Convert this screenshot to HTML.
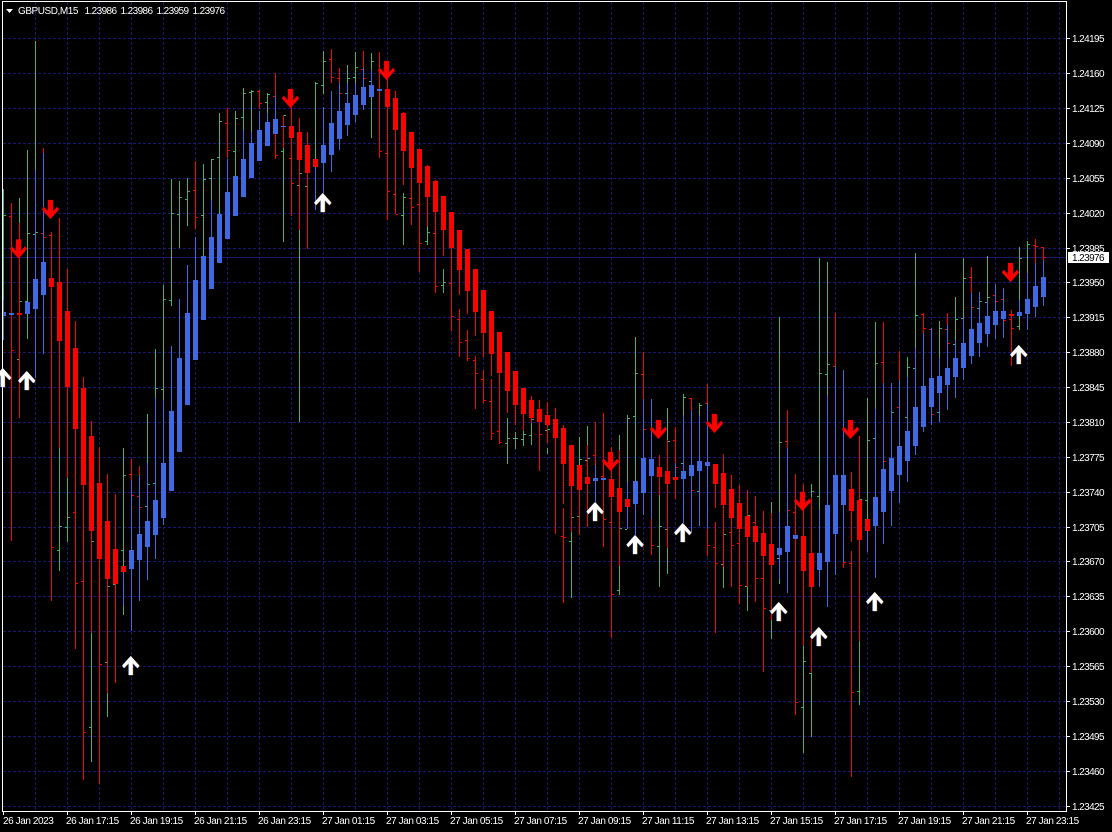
<!DOCTYPE html>
<html><head><meta charset="utf-8"><title>GBPUSD,M15</title>
<style>
html,body{margin:0;padding:0;background:#000;width:1112px;height:832px;overflow:hidden}
svg{display:block}
text{font-family:"Liberation Sans",sans-serif;font-size:10px;fill:#fff}
.p text,text.p{letter-spacing:-.6px}
.d text{letter-spacing:-.42px}
path{fill:none}
</style></head><body>
<svg width="1112" height="832" viewBox="0 0 1112 832" xmlns="http://www.w3.org/2000/svg">
<rect width="1112" height="832" fill="#000"/>
<g shape-rendering="crispEdges">
<path stroke="#191970" stroke-dasharray="3 2" d="M3 38.5H1066M3 73.5H1066M3 108.5H1066M3 143.5H1066M3 178.5H1066M3 213.5H1066M3 248.5H1066M3 282.5H1066M3 317.5H1066M3 352.5H1066M3 387.5H1066M3 422.5H1066M3 457.5H1066M3 492.5H1066M3 527.5H1066M3 561.5H1066M3 596.5H1066M3 631.5H1066M3 666.5H1066M3 701.5H1066M3 736.5H1066M3 771.5H1066M3 806.5H1066"/>
<path stroke="#191970" stroke-dasharray="3 2" d="M35.5 2V811M67.5 2V811M99.5 2V811M131.5 2V811M163.5 2V811M195.5 2V811M227.5 2V811M259.5 2V811M291.5 2V811M323.5 2V811M355.5 2V811M387.5 2V811M419.5 2V811M451.5 2V811M483.5 2V811M515.5 2V811M547.5 2V811M579.5 2V811M611.5 2V811M643.5 2V811M675.5 2V811M707.5 2V811M739.5 2V811M771.5 2V811M803.5 2V811M835.5 2V811M867.5 2V811M899.5 2V811M931.5 2V811M963.5 2V811M995.5 2V811M1027.5 2V811M1059.5 2V811"/>
<path stroke="#191970" d="M3 257.5H1066"/>

<path stroke="#3cb371" d="M3.5 189V300M19.5 198V223M27.5 150V339M35.5 41V170M59.5 448V571M67.5 478V542M91.5 633V762M107.5 693V717M123.5 448V566M123.5 606V615M147.5 414V463M155.5 349V398M163.5 285V400M171.5 179V306M179.5 181V248M187.5 178V226M203.5 164V256M211.5 159V200M219.5 113V214M235.5 111V176M243.5 88V130M251.5 90V132M267.5 93V113M283.5 148V242M299.5 230V422M315.5 82V159M323.5 51V94M347.5 65V83M355.5 52V83M371.5 53V70M371.5 97V138M403.5 193V245M427.5 226V245M443.5 269V293M507.5 418V464M515.5 432V449M523.5 431V446M531.5 423V445M547.5 448V454M571.5 532V598M579.5 437V465M587.5 426V445M619.5 435V450M619.5 566V595M627.5 415V482M635.5 337V481M659.5 495V587M667.5 408V440M667.5 548V574M683.5 394V415M699.5 403V415M723.5 567V588M747.5 587V611M771.5 502V513M771.5 620V639M779.5 317V512M779.5 579V584M803.5 646V753M811.5 484V497M811.5 673V737M819.5 258V510M827.5 262V395M859.5 641V705M867.5 398V519M875.5 322V409M907.5 357V377M915.5 253V348M939.5 321V357M955.5 297V340M963.5 258V318M987.5 256V300M1019.5 247V300M1019.5 316V330M1027.5 241V273
M4 215.5h2M20 301.5h2M17 359.5h2M28 233.5h2M25 301.5h2M33 234.5h2M36 232.5h2M60 526.5h2M57 550.5h2M68 517.5h2M65 527.5h2M92 541.5h2M89 727.5h2M108 586.5h2M105 662.5h2M113 584.5h2M124 475.5h2M121 550.5h2M148 484.5h2M145 506.5h2M156 388.5h2M153 483.5h2M164 299.5h2M161 389.5h2M172 213.5h2M169 300.5h2M180 197.5h2M177 214.5h2M188 191.5h2M185 199.5h2M204 179.5h2M201 215.5h2M212 159.5h2M209 178.5h2M220 121.5h2M217 157.5h2M236 118.5h2M233 151.5h2M244 93.5h2M241 117.5h2M252 91.5h2M249 92.5h2M268 94.5h2M265 102.5h2M284 115.5h2M281 151.5h2M300 173.5h2M297 185.5h2M305 186.5h2M316 83.5h2M324 61.5h2M321 85.5h2M348 78.5h2M345 93.5h2M356 67.5h2M353 77.5h2M372 61.5h2M369 81.5h2M404 197.5h2M401 215.5h2M428 232.5h2M425 241.5h2M444 282.5h2M441 285.5h2M508 438.5h2M505 443.5h2M516 438.5h2M513 438.5h2M524 434.5h2M521 439.5h2M532 419.5h2M529 435.5h2M548 429.5h2M545 430.5h2M572 517.5h2M569 541.5h2M580 459.5h2M577 516.5h2M588 458.5h2M585 460.5h2M620 528.5h2M617 590.5h2M628 418.5h2M625 529.5h2M636 373.5h2M633 416.5h2M660 526.5h2M657 546.5h2M668 441.5h2M665 529.5h2M684 397.5h2M681 463.5h2M700 405.5h2M697 491.5h2M724 534.5h2M721 564.5h2M748 515.5h2M745 586.5h2M769 610.5h2M772 610.5h2M780 442.5h2M777 558.5h2M804 661.5h2M801 707.5h2M812 491.5h2M809 673.5h2M820 373.5h2M817 496.5h2M828 364.5h2M825 374.5h2M860 499.5h2M857 691.5h2M868 440.5h2M865 500.5h2M876 363.5h2M873 438.5h2M892 412.5h2M908 367.5h2M905 417.5h2M916 315.5h2M913 368.5h2M940 328.5h2M937 412.5h2M956 319.5h2M953 344.5h2M964 278.5h2M961 318.5h2M980 301.5h2M977 308.5h2M988 297.5h2M985 302.5h2M1020 258.5h2M1017 326.5h2M1028 244.5h2"/>

<path stroke="#f00" d="M11.5 203V541M19.5 223V418M43.5 148V153M51.5 232V601M59.5 218V448M67.5 269V478M75.5 321V649M83.5 377V780M91.5 421V633M99.5 447V784M107.5 474V693M115.5 494V683M131.5 459V480M139.5 466V475M195.5 161V229M227.5 108V158M259.5 90V109M275.5 73V95M275.5 134V159M283.5 115V148M291.5 100V216M299.5 118V230M307.5 132V249M331.5 49V83M339.5 68V83M363.5 51V67M379.5 52V158M387.5 79V220M395.5 91V214M403.5 112V185M411.5 132V225M419.5 149V272M427.5 165V226M435.5 180V293M443.5 196V256M451.5 212V331M459.5 230V295M459.5 309V357M467.5 249V314M467.5 330V361M475.5 269V336M475.5 356V409M483.5 290V357M483.5 370V403M491.5 311V376M491.5 379V440M499.5 332V444M507.5 352V413M515.5 371V425M523.5 388V431M531.5 396V423M539.5 400V471M547.5 402V443M555.5 408V534M563.5 425V504M563.5 508V603M571.5 445V532M579.5 465V535M587.5 445V527M595.5 422V465M603.5 413V547M611.5 447V638M619.5 450V566M643.5 352V399M651.5 519V555M659.5 455V495M667.5 440V471M667.5 484V548M675.5 427V463M675.5 480V499M691.5 398V410M707.5 384V403M707.5 529V556M715.5 464V508M715.5 522V633M723.5 454V567M731.5 475V587M739.5 485V604M747.5 490V587M755.5 496V602M763.5 511V672M771.5 513V620M787.5 410V448M795.5 474V715M803.5 484V646M811.5 497V673M835.5 313V366M843.5 562V568M851.5 472V542M851.5 551V777M859.5 436V641M883.5 322V383M899.5 351V380M923.5 313V333M947.5 313V325M971.5 267V293M1011.5 310V366M1035.5 239V263M1043.5 247V260
M9 216.5h2M12 350.5h2M41 233.5h2M44 237.5h2M49 235.5h2M52 547.5h2M73 512.5h2M76 583.5h2M81 581.5h2M84 732.5h2M100 664.5h2M129 474.5h2M132 495.5h2M137 496.5h2M140 507.5h2M193 190.5h2M196 217.5h2M225 123.5h2M228 150.5h2M257 91.5h2M260 103.5h2M273 96.5h2M276 155.5h2M289 158.5h2M292 183.5h2M329 59.5h2M332 77.5h2M337 78.5h2M340 93.5h2M361 69.5h2M364 78.5h2M380 151.5h2M385 153.5h2M388 191.5h2M393 194.5h2M396 214.5h2M409 198.5h2M412 207.5h2M417 204.5h2M420 243.5h2M433 233.5h2M436 286.5h2M449 283.5h2M452 316.5h2M457 319.5h2M460 342.5h2M465 340.5h2M468 358.5h2M473 360.5h2M476 373.5h2M481 379.5h2M484 400.5h2M489 401.5h2M492 433.5h2M497 431.5h2M500 442.5h2M540 434.5h2M561 536.5h2M564 537.5h2M593 455.5h2M601 476.5h2M604 519.5h2M609 522.5h2M612 594.5h2M641 374.5h2M644 429.5h2M652 545.5h2M673 440.5h2M676 467.5h2M689 398.5h2M692 490.5h2M705 403.5h2M708 545.5h2M713 547.5h2M716 563.5h2M729 532.5h2M732 545.5h2M737 543.5h2M740 585.5h2M753 522.5h2M756 578.5h2M761 578.5h2M764 608.5h2M785 441.5h2M788 510.5h2M793 512.5h2M796 702.5h2M833 366.5h2M844 562.5h2M849 563.5h2M852 692.5h2M881 362.5h2M884 461.5h2M897 407.5h2M921 314.5h2M924 328.5h2M929 329.5h2M932 414.5h2M945 329.5h2M948 343.5h2M969 277.5h2M972 307.5h2M993 295.5h2M996 301.5h2M1001 299.5h2M1004 320.5h2M1009 319.5h2M1012 328.5h2M1033 245.5h2M1036 246.5h2M1041 247.5h2M1044 257.5h2"/>

<path stroke="#4169e1" d="M3.5 300V340M35.5 170V378M43.5 153V354M123.5 572V606M131.5 480V631M139.5 475V601M147.5 463V580M155.5 398V559M163.5 400V525M171.5 346V411M179.5 299V358M187.5 265V313M195.5 237V280M211.5 200V237M227.5 159V192M243.5 130V159M251.5 132V143M259.5 111V130M267.5 113V122M275.5 95V119M315.5 167V210M323.5 107V193M331.5 91V172M339.5 83V150M347.5 83V136M355.5 83V122M363.5 67V110M371.5 70V85M595.5 465V502M627.5 482V529M635.5 481V535M643.5 399V515M651.5 399V519M675.5 463V477M683.5 415V523M691.5 410V533M699.5 415V526M707.5 403V529M779.5 512V579M787.5 448V593M819.5 510V587M827.5 395V607M835.5 366V575M843.5 370V562M867.5 531V552M875.5 409V578M883.5 383V544M891.5 383V526M899.5 380V503M907.5 377V482M915.5 348V455M923.5 333V432M931.5 328V425M939.5 357V422M947.5 325V410M955.5 340V398M963.5 318V380M971.5 293V364M979.5 292V357M987.5 300V347M995.5 284V339M1003.5 288V338M1019.5 300V312M1027.5 273V330M1035.5 263V317M1043.5 260V306"/>

<path stroke="#4169e1" stroke-width="5" d="M11.5 313V315M27.5 302V314M35.5 279V309M43.5 262V295M131.5 550V569M139.5 534V560M147.5 521V547M155.5 500V535M163.5 463V518M171.5 411V491M179.5 358V452M187.5 313V405M195.5 280V360M203.5 256V320M211.5 237V289M219.5 214V263M227.5 192V239M235.5 176V216M243.5 159V197M251.5 143V178M259.5 130V161M267.5 122V146M275.5 119V134M283.5 126V127M323.5 145V163M331.5 123V155M339.5 111V139M347.5 103V125M355.5 95V115M363.5 87V105M371.5 85V97M379.5 89V91M595.5 478V481M603.5 478V480M635.5 481V504M643.5 458V493M651.5 459V476M683.5 471V479M691.5 465V476M699.5 461V471M707.5 462V466M779.5 548V555M787.5 526V552M795.5 535V539M819.5 553V570M827.5 505V562M835.5 475V534M843.5 475V505M875.5 497V526M883.5 469V512M891.5 458V491M899.5 446V475M907.5 431V461M915.5 407V446M923.5 386V427M931.5 378V407M939.5 376V393M947.5 368V385M955.5 358V377M963.5 343V368M971.5 329V356M979.5 323V343M987.5 316V334M995.5 311V325M1003.5 311V319M1019.5 312V316M1027.5 299V314M1035.5 286V307M1043.5 277V297"/>
<rect x="3" y="312" width="3" height="4" fill="#4169e1"/>

<path stroke="#f00" stroke-width="5" d="M19.5 313V315M51.5 278V287M59.5 282V341M67.5 311V387M75.5 348V429M83.5 388V485M91.5 436V531M99.5 483V559M107.5 521V579M115.5 549V584M123.5 566V572M291.5 126V138M299.5 132V160M307.5 145V173M315.5 159V167M387.5 89V107M395.5 98V130M403.5 113V151M411.5 132V168M419.5 149V183M427.5 166V197M435.5 181V212M443.5 196V230M451.5 212V248M459.5 230V270M467.5 249V291M475.5 269V312M483.5 290V333M491.5 311V354M499.5 332V373M507.5 352V391M515.5 371V405M523.5 388V414M531.5 400V418M539.5 409V422M547.5 415V425M555.5 419V438M563.5 428V464M571.5 445V486M579.5 465V490M587.5 477V484M611.5 479V497M619.5 488V512M627.5 499V507M659.5 467V477M667.5 471V484M675.5 477V480M715.5 464V484M723.5 473V505M731.5 489V518M739.5 503V529M747.5 516V537M755.5 526V542M763.5 533V556M771.5 544V565M803.5 536V571M811.5 553V587M851.5 489V511M859.5 500V540M867.5 519V531M1011.5 314V316"/>

<path stroke="#fff" d="M2.5 1.5V811.5M2 1.5H1067M1066.5 1V812M2 811.5H1067"/>
<path stroke="#fff" d="M3.5 812V815M67.5 812V815M131.5 812V815M195.5 812V815M259.5 812V815M323.5 812V815M387.5 812V815M451.5 812V815M515.5 812V815M579.5 812V815M643.5 812V815M707.5 812V815M771.5 812V815M835.5 812V815M899.5 812V815M963.5 812V815M1027.5 812V815M1067 38.5h3M1067 73.5h3M1067 108.5h3M1067 143.5h3M1067 178.5h3M1067 213.5h3M1067 248.5h3M1067 282.5h3M1067 317.5h3M1067 352.5h3M1067 387.5h3M1067 422.5h3M1067 457.5h3M1067 492.5h3M1067 527.5h3M1067 561.5h3M1067 596.5h3M1067 631.5h3M1067 666.5h3M1067 701.5h3M1067 736.5h3M1067 771.5h3M1067 806.5h3"/>
</g>

<path style="fill:#f00" stroke="#c00000" stroke-width=".3" d="M18.5 258.5l-8.5-9.5l1.7-2.8l4.3 4.6v-11.3h5v11.3l4.3-4.6l1.7 2.8zM50.5 219l-8.5-9.5l1.7-2.8l4.3 4.6v-11.3h5v11.3l4.3-4.6l1.7 2.8zM290.5 108l-8.5-9.5l1.7-2.8l4.3 4.6v-11.3h5v11.3l4.3-4.6l1.7 2.8zM386.5 80l-8.5-9.5l1.7-2.8l4.3 4.6v-11.3h5v11.3l4.3-4.6l1.7 2.8zM610.5 471l-8.5-9.5l1.7-2.8l4.3 4.6v-11.3h5v11.3l4.3-4.6l1.7 2.8zM658.5 439l-8.5-9.5l1.7-2.8l4.3 4.6v-11.3h5v11.3l4.3-4.6l1.7 2.8zM714.5 433l-8.5-9.5l1.7-2.8l4.3 4.6v-11.3h5v11.3l4.3-4.6l1.7 2.8zM802.5 511l-8.5-9.5l1.7-2.8l4.3 4.6v-11.3h5v11.3l4.3-4.6l1.7 2.8zM850.5 439l-8.5-9.5l1.7-2.8l4.3 4.6v-11.3h5v11.3l4.3-4.6l1.7 2.8zM1010.5 282l-8.5-9.5l1.7-2.8l4.3 4.6v-11.3h5v11.3l4.3-4.6l1.7 2.8z"/>

<path style="fill:#2a55c8" transform="translate(-.5 .2)" d="M2.7 368l8.5 9.5l-1.7 2.6l-4.8-5v11.9h-4v-11.9l-4.8 5l-1.7-2.6zM26.7 371l8.5 9.5l-1.7 2.6l-4.8-5v11.9h-4v-11.9l-4.8 5l-1.7-2.6zM130.7 656l8.5 9.5l-1.7 2.6l-4.8-5v11.9h-4v-11.9l-4.8 5l-1.7-2.6zM322.7 193l8.5 9.5l-1.7 2.6l-4.8-5v11.9h-4v-11.9l-4.8 5l-1.7-2.6zM595 502l8.5 9.5l-1.7 2.6l-4.8-5v11.9h-4v-11.9l-4.8 5l-1.7-2.6zM635 535l8.5 9.5l-1.7 2.6l-4.8-5v11.9h-4v-11.9l-4.8 5l-1.7-2.6zM682.7 523l8.5 9.5l-1.7 2.6l-4.8-5v11.9h-4v-11.9l-4.8 5l-1.7-2.6zM778.7 602l8.5 9.5l-1.7 2.6l-4.8-5v11.9h-4v-11.9l-4.8 5l-1.7-2.6zM818.7 627l8.5 9.5l-1.7 2.6l-4.8-5v11.9h-4v-11.9l-4.8 5l-1.7-2.6zM874.7 592l8.5 9.5l-1.7 2.6l-4.8-5v11.9h-4v-11.9l-4.8 5l-1.7-2.6zM1018.7 345l8.5 9.5l-1.7 2.6l-4.8-5v11.9h-4v-11.9l-4.8 5l-1.7-2.6z"/>
<path style="fill:#c88030" transform="translate(.5 .2)" d="M2.7 368l8.5 9.5l-1.7 2.6l-4.8-5v11.9h-4v-11.9l-4.8 5l-1.7-2.6zM26.7 371l8.5 9.5l-1.7 2.6l-4.8-5v11.9h-4v-11.9l-4.8 5l-1.7-2.6zM130.7 656l8.5 9.5l-1.7 2.6l-4.8-5v11.9h-4v-11.9l-4.8 5l-1.7-2.6zM322.7 193l8.5 9.5l-1.7 2.6l-4.8-5v11.9h-4v-11.9l-4.8 5l-1.7-2.6zM595 502l8.5 9.5l-1.7 2.6l-4.8-5v11.9h-4v-11.9l-4.8 5l-1.7-2.6zM635 535l8.5 9.5l-1.7 2.6l-4.8-5v11.9h-4v-11.9l-4.8 5l-1.7-2.6zM682.7 523l8.5 9.5l-1.7 2.6l-4.8-5v11.9h-4v-11.9l-4.8 5l-1.7-2.6zM778.7 602l8.5 9.5l-1.7 2.6l-4.8-5v11.9h-4v-11.9l-4.8 5l-1.7-2.6zM818.7 627l8.5 9.5l-1.7 2.6l-4.8-5v11.9h-4v-11.9l-4.8 5l-1.7-2.6zM874.7 592l8.5 9.5l-1.7 2.6l-4.8-5v11.9h-4v-11.9l-4.8 5l-1.7-2.6zM1018.7 345l8.5 9.5l-1.7 2.6l-4.8-5v11.9h-4v-11.9l-4.8 5l-1.7-2.6z"/>
<path style="fill:#fff" d="M2.7 368l8.5 9.5l-1.7 2.6l-4.8-5v11.9h-4v-11.9l-4.8 5l-1.7-2.6zM26.7 371l8.5 9.5l-1.7 2.6l-4.8-5v11.9h-4v-11.9l-4.8 5l-1.7-2.6zM130.7 656l8.5 9.5l-1.7 2.6l-4.8-5v11.9h-4v-11.9l-4.8 5l-1.7-2.6zM322.7 193l8.5 9.5l-1.7 2.6l-4.8-5v11.9h-4v-11.9l-4.8 5l-1.7-2.6zM595 502l8.5 9.5l-1.7 2.6l-4.8-5v11.9h-4v-11.9l-4.8 5l-1.7-2.6zM635 535l8.5 9.5l-1.7 2.6l-4.8-5v11.9h-4v-11.9l-4.8 5l-1.7-2.6zM682.7 523l8.5 9.5l-1.7 2.6l-4.8-5v11.9h-4v-11.9l-4.8 5l-1.7-2.6zM778.7 602l8.5 9.5l-1.7 2.6l-4.8-5v11.9h-4v-11.9l-4.8 5l-1.7-2.6zM818.7 627l8.5 9.5l-1.7 2.6l-4.8-5v11.9h-4v-11.9l-4.8 5l-1.7-2.6zM874.7 592l8.5 9.5l-1.7 2.6l-4.8-5v11.9h-4v-11.9l-4.8 5l-1.7-2.6zM1018.7 345l8.5 9.5l-1.7 2.6l-4.8-5v11.9h-4v-11.9l-4.8 5l-1.7-2.6z"/>

<polygon points="6,9 13,9 9.5,13" fill="#fff"/>
<text x="18" y="14" letter-spacing="-.45">GBPUSD,M15</text>
<g class="p">
<text x="84.5" y="14">1.23986</text><text x="120.5" y="14">1.23986</text><text x="156.5" y="14">1.23959</text><text x="192.5" y="14">1.23976</text>
<text x="1072" y="42">1.24195</text><text x="1072" y="77">1.24160</text><text x="1072" y="112">1.24125</text><text x="1072" y="147">1.24090</text><text x="1072" y="182">1.24055</text><text x="1072" y="217">1.24020</text><text x="1072" y="252">1.23985</text><text x="1072" y="286">1.23950</text><text x="1072" y="321">1.23915</text><text x="1072" y="356">1.23880</text><text x="1072" y="391">1.23845</text><text x="1072" y="426">1.23810</text><text x="1072" y="461">1.23775</text><text x="1072" y="496">1.23740</text><text x="1072" y="531">1.23705</text><text x="1072" y="565">1.23670</text><text x="1072" y="600">1.23635</text><text x="1072" y="635">1.23600</text><text x="1072" y="670">1.23565</text><text x="1072" y="705">1.23530</text><text x="1072" y="740">1.23495</text><text x="1072" y="775">1.23460</text><text x="1072" y="810">1.23425</text>
</g>
<rect x="1068" y="252" width="41" height="11" fill="#fff"/>
<text x="1072" y="261" class="p" style="fill:#000">1.23976</text>
<g class="d">
<text x="3" y="824">26 Jan 2023</text><text x="66" y="824">26 Jan 17:15</text><text x="130" y="824">26 Jan 19:15</text><text x="194" y="824">26 Jan 21:15</text><text x="258" y="824">26 Jan 23:15</text><text x="322" y="824">27 Jan 01:15</text><text x="386" y="824">27 Jan 03:15</text><text x="450" y="824">27 Jan 05:15</text><text x="514" y="824">27 Jan 07:15</text><text x="578" y="824">27 Jan 09:15</text><text x="642" y="824">27 Jan 11:15</text><text x="706" y="824">27 Jan 13:15</text><text x="770" y="824">27 Jan 15:15</text><text x="834" y="824">27 Jan 17:15</text><text x="898" y="824">27 Jan 19:15</text><text x="962" y="824">27 Jan 21:15</text><text x="1026" y="824">27 Jan 23:15</text>
</g>
</svg>
</body></html>
